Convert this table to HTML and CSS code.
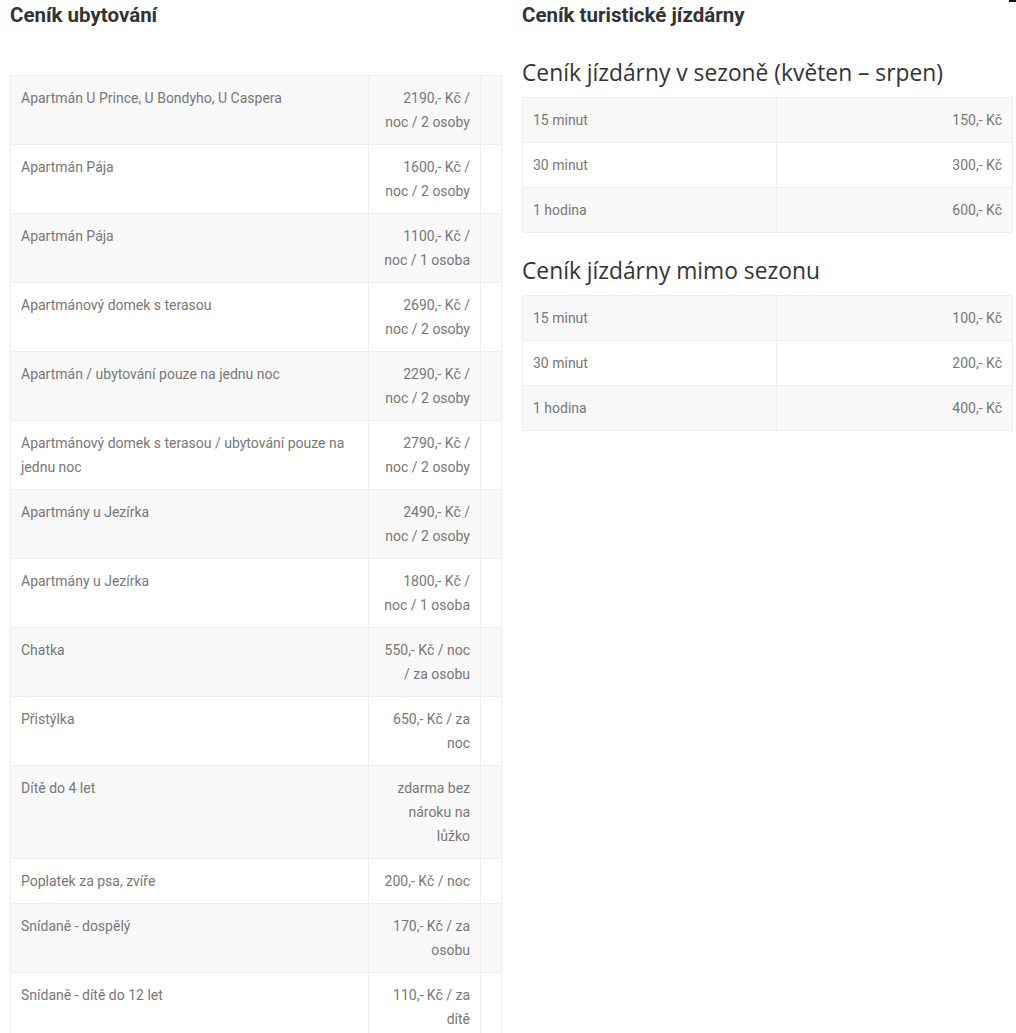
FILE: index.html
```html
<!DOCTYPE html>
<html lang="cs">
<head>
<meta charset="utf-8">
<title>Ceník</title>
<link rel="stylesheet" href="styles.css">
</head>
<body>
<span class="corner-mark"></span>
<div class="page">
  <section class="col">
    <h2 class="title">Ceník ubytování</h2>
    <table class="price price-main">
      <colgroup><col class="c-name"><col class="c-price"><col class="c-empty"></colgroup>
      <tbody>
        <tr><td>Apartmán U Prince, U Bondyho, U Caspera</td><td class="num">2190,- Kč / noc / 2 osoby</td><td></td></tr>
        <tr><td>Apartmán Pája</td><td class="num">1600,- Kč / noc / 2 osoby</td><td></td></tr>
        <tr><td>Apartmán Pája</td><td class="num">1100,- Kč / noc / 1 osoba</td><td></td></tr>
        <tr><td>Apartmánový domek s terasou</td><td class="num">2690,- Kč / noc / 2 osoby</td><td></td></tr>
        <tr><td>Apartmán / ubytování pouze na jednu noc</td><td class="num">2290,- Kč / noc / 2 osoby</td><td></td></tr>
        <tr><td>Apartmánový domek s terasou / ubytování pouze na jednu noc</td><td class="num">2790,- Kč / noc / 2 osoby</td><td></td></tr>
        <tr><td>Apartmány u Jezírka</td><td class="num">2490,- Kč / noc / 2 osoby</td><td></td></tr>
        <tr><td>Apartmány u Jezírka</td><td class="num">1800,- Kč / noc / 1 osoba</td><td></td></tr>
        <tr><td>Chatka</td><td class="num">550,- Kč / noc / za osobu</td><td></td></tr>
        <tr><td>Přistýlka</td><td class="num">650,- Kč / za noc</td><td></td></tr>
        <tr><td>Dítě do 4 let</td><td class="num">zdarma bez nároku na lůžko</td><td></td></tr>
        <tr><td>Poplatek za psa, zvíře</td><td class="num">200,- Kč / noc</td><td></td></tr>
        <tr><td>Snídaně - dospělý</td><td class="num">170,- Kč / za osobu</td><td></td></tr>
        <tr><td>Snídaně - dítě do 12 let</td><td class="num">110,- Kč / za dítě</td><td></td></tr>
      </tbody>
    </table>
  </section>
  <section class="col">
    <h2 class="title">Ceník turistické jízdárny</h2>
    <h3 class="sub sub-first">Ceník jízdárny v sezoně (květen – srpen)</h3>
    <table class="price price-half">
      <colgroup><col class="c-half"><col></colgroup>
      <tbody>
        <tr><td>15 minut</td><td class="num">150,- Kč</td></tr>
        <tr><td>30 minut</td><td class="num">300,- Kč</td></tr>
        <tr><td>1 hodina</td><td class="num">600,- Kč</td></tr>
      </tbody>
    </table>
    <h3 class="sub">Ceník jízdárny mimo sezonu</h3>
    <table class="price price-half">
      <colgroup><col class="c-half"><col></colgroup>
      <tbody>
        <tr><td>15 minut</td><td class="num">100,- Kč</td></tr>
        <tr><td>30 minut</td><td class="num">200,- Kč</td></tr>
        <tr><td>1 hodina</td><td class="num">400,- Kč</td></tr>
      </tbody>
    </table>
  </section>
</div>
</body>
</html>
```

FILE: styles.css
```css
html, body {
  margin: 0;
  padding: 0;
  background: #fff;
}

body {
  font-family: Roboto, "Liberation Sans", Arial, sans-serif;
  font-size: 14px;
  color: #777;
  position: relative;
}

.corner-mark {
  position: absolute;
  top: 0;
  right: 0;
  width: 7px;
  height: 2px;
  background: #111;
}

.page {
  display: grid;
  grid-template-columns: 491px 491px;
  column-gap: 21px;
  padding: 0 10px;
}

.col {
  min-width: 0;
}

.title {
  margin: 0;
  font-family: Roboto, "Liberation Sans", Arial, sans-serif;
  font-weight: 700;
  font-size: 20.5px;
  line-height: 30px;
  color: #333;
}

.price-main {
  margin-top: 45px;
}

.sub {
  margin: 23px 0 9px;
  font-family: "Open Sans", "Liberation Sans", sans-serif;
  font-weight: 400;
  font-size: 22.8px;
  line-height: 30px;
  color: #333;
}

.sub-first {
  margin-top: 28px;
}

.price {
  width: 100%;
  border-collapse: collapse;
  table-layout: fixed;
}

.price td {
  border: 1px solid #ededed;
  padding: 10px;
  line-height: 24px;
  vertical-align: top;
  text-align: left;
}

.price tr:nth-child(odd) td {
  background: #f9f9f9;
}

.price td.num {
  text-align: right;
}

.c-name { width: 358px; }
.c-price { width: 112px; }
.c-empty { width: 21px; }
.c-half { width: 254px; }
```
